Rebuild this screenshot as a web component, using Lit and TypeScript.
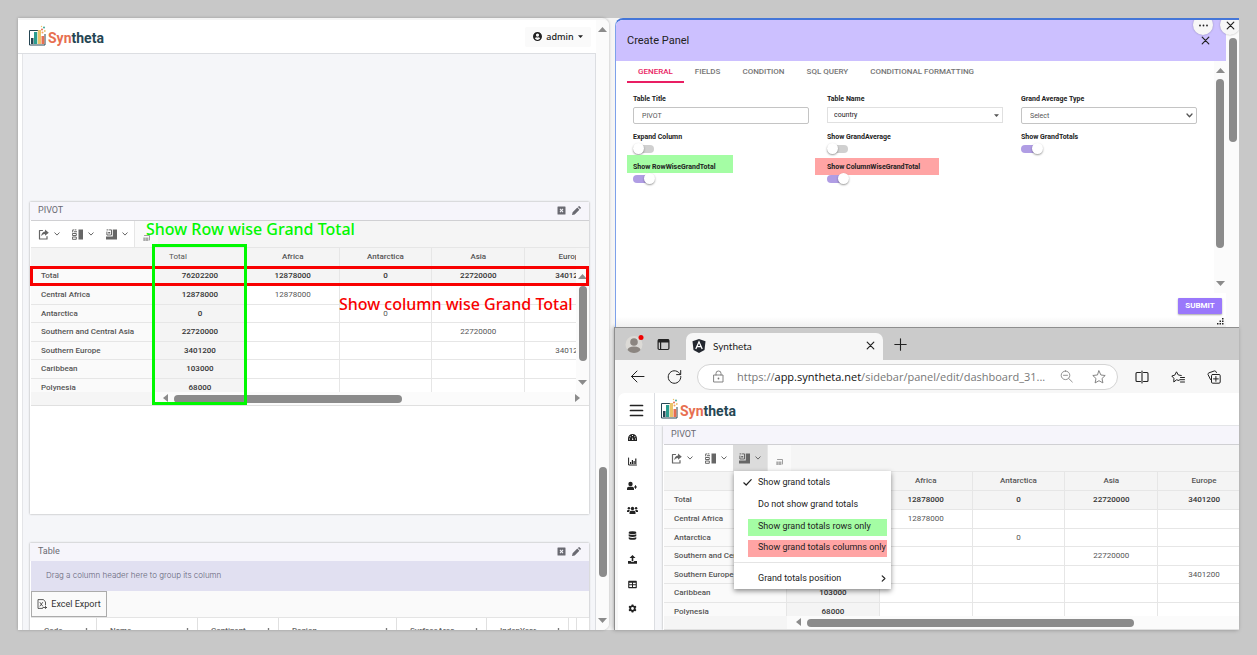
import { LitElement, html, css, svg, nothing } from "lit";
import { customElement, property } from "lit/decorators.js";
import { classMap } from "lit/directives/class-map.js";

const shared = css`
  * {
    box-sizing: border-box;
  }
  button {
    font: inherit;
    color: inherit;
    background: none;
    border: 0;
    padding: 0;
    display: inline-flex;
    align-items: center;
    justify-content: center;
    cursor: pointer;
  }
  svg {
    display: block;
    flex: none;
  }
`;

const icon = (size: number, box: number, body: unknown) =>
  html`<svg width=${size} height=${size} viewBox="0 0 ${box} ${box}" fill="currentColor" aria-hidden="true">${body}</svg>`;

const line = (d: string, w = 1) =>
  svg`<path d=${d} fill="none" stroke="currentColor" stroke-width=${w} stroke-linecap="round" stroke-linejoin="round"/>`;

const glyphs = {
  closeBox: icon(9, 9, svg`<path fill-rule="evenodd" d="M1 .5h7q.5 0 .5.5v7q0 .5-.5.5H1Q.5 8.500.5 8V1Q.5.5 1 .5zM2.600 3.300 3.700 4.500 2.600 5.700l.7.7L4.500 5.300l1.200 1.100.7-.7L5.300 4.500l1.100-1.200-.7-.7L4.500 3.700 3.300 2.600z"/>`),
  pencil: icon(9, 9, svg`<path d="M0 9l.6-2.700L5.300 1.600l2.100 2.100L2.700 8.400zM5.900 1l.8-.8q.4-.4.8 0l1.300 1.300q.4.4 0 .8L8 3.100z"/>`),
  share: icon(11, 11, svg`${line("M4.500 1.500H1.500V10H9V7.500", 1.200)}<path d="M7 .6 10.800 3.700 7 6.800V5Q4.600 5 3.300 7.300 3.400 2.900 7 2.500z"/>`),
  subtotals: icon(11, 11, svg`<path d="M6.500.5H11v10H6.500z"/>${line("M4 .9H3M1.500 .9H.7V3M.8 4.500h3.500v2H.8zM.8 8h3.500v2.300H.8z", 1)}<path d="M2 2.200h3v1H2z"/>`),
  totals: icon(11, 11, svg`<path d="M6.800.5H11V10.500H0V7.500H6.800z"/>${line("M1 .9h1M3.500 .9h2V6H.9V3", 1)}<path d="M2.200 3h2v1.500h-2z"/>`),
  small: icon(7, 7, svg`${line("M1.500 1.500H6.500V6", 0.8)}<path d="M.5 3.500h1.200V7H.5zM2.500 3.500h1.200V7H2.500zM4.300 3.500h1V7h-1z"/>`),
  chevron: icon(6, 6, line("M.8 1.800 3 4.100 5.200 1.800", 1)),
  check: icon(9, 9, line("M.8 4.800 3.200 7 8.200 1.600", 1.200)),
  right: icon(7, 7, line("M2.200.9 4.900 3.500 2.200 6.100", 1.200)),
  close: icon(9, 9, line("M1.200 1.200 7.800 7.800M7.800 1.200 1.200 7.800", 1.200)),
  dots: icon(9, 9, svg`<circle cx="1" cy="4.500" r=".9"/><circle cx="4.500" cy="4.500" r=".9"/><circle cx="8" cy="4.500" r=".9"/>`),
  user: icon(9, 9, svg`<path fill-rule="evenodd" d="M4.500 0a4.500 4.500 0 1 1 0 9 4.500 4.500 0 0 1 0-9zm0 1.500a1.600 1.600 0 1 0 0 3.200 1.600 1.600 0 0 0 0-3.200zM1.900 6.600Q4.500 9.500 7.100 6.600 6.500 5.200 5.500 5.200 4.500 5.600 3.500 5.200 2.500 5.200 1.900 6.600z"/>`),
  caret: icon(5, 5, svg`<path d="M0 1.200h5L2.500 4z"/>`),
  kebab: icon(7, 7, svg`<circle cx="3.500" cy="1" r=".8"/><circle cx="3.500" cy="3.500" r=".8"/><circle cx="3.500" cy="6" r=".8"/>`),
  excel: icon(10, 10, svg`${line("M8.500 6V3L6.500.6H1V9.400H5.500M6 8.500H9.500M8.300 7.300 9.500 8.500 8.300 9.500", 0.8)}${line("M3 3.500 5.600 7M5.600 3.500 3 7", 0.8)}`),
  menu: icon(15, 15, line("M1.500 2.500h12M1.500 7.500h12M1.500 12.500h12", 1.700)),
  back: icon(15, 15, line("M14 7.500H1.500M7 2 1.500 7.500 7 13", 1)),
  reload: icon(15, 15, line("M13.300 5.500A6.300 6.300 0 1 0 13.800 7.500M13.700 1.500V5.600H9.600", 1)),
  lock: icon(13, 13, svg`${line("M2 5h9v7H2zM4 5V3.300Q4 1 6.500 1T9 3.300V5", 0.9)}<circle cx="6.500" cy="8.500" r=".9"/>`),
  zoomOut: icon(13, 13, line("M5.500 1a4.300 4.300 0 1 1 0 8.600 4.300 4.300 0 0 1 0-8.600zM8.700 8.500 12.300 12M3.500 5.300h4", 0.8)),
  star: icon(14, 14, line("M7 .9 8.900 5l4.300.5-3.200 3 .9 4.400L7 10.700 3.100 12.900 4 8.500.8 5.500 5.100 5z", 0.9)),
  split: icon(14, 14, line("M5.500 2.500H2Q1 2.500 1 3.500v7q0 1 1 1h3.500M8.500 2.500H12q1 0 1 1v7q0 1-1 1H8.500M7 1V13", 1.100)),
  favourites: icon(14, 14, line("M8 10.500 5.500 9.800 2.800 12 2.900 8.300.8 6l3-.9L5.500 1.800 7.300 5l3 .5M9.500 7.500H13.500M8.700 9.700H13.500M9.500 12H13.500", 1)),
  collections: icon(14, 14, line("M3.500 9.500 1 4.500Q.8 3.300 2 2.800L7.500.9Q9 .8 9.500 2.500M5.500 4.500H12q1.200 0 1.200 1.200V12q0 1.200-1.200 1.200H5.700Q4.500 13.200 4.500 12V5.700Q4.500 4.500 5.500 4.500zM8.900 6.500v4.800M6.500 8.900h4.800", 1)),
  workspace: icon(13, 13, svg`${line("M2.300 1.500h8.400q1.200 0 1.200 1.200v7.600q0 1.200-1.200 1.200H2.300Q1.100 11.500 1.100 10.300V2.700Q1.100 1.500 2.300 1.500z", 1.200)}<path d="M1 1.500h11V4.500H1zM3 4h1.200v7.500H3z"/>`),
  plus: icon(13, 13, line("M6.500.8v11.400M.8 6.500h11.400", 1.100)),
};

const sideIcons: [string, unknown][] = [
  ["Dashboard", icon(9, 9, svg`<path fill-rule="evenodd" d="M0 5.500a4.500 4.500 0 0 1 9 0V8H0zM4 2h1v1H4zM1.700 3.200h1v1h-1zM6.300 3.200h1v1h-1zM1 5.500h1v1H1zM7 5.500h1v1H7zM4 7l.8-3 .5 3z"/>`)],
  ["Reports", icon(9, 9, svg`${line("M.6 1v7H8.500", 1)}<path d="M2 5h1.200v2H2zM3.800 3H5v4H3.800zM5.500 4h1.200v3H5.500zM7.200 1.500h1.200V7H7.200z"/>`)],
  ["Add user", icon(10, 10, svg`<circle cx="3.500" cy="3" r="2.200"/><path d="M0 9V7.500Q0 5.700 1.800 5.700h3.400Q7 5.700 7 7.500V9zM7 5.500h1V4.300h1v1.200h1v1H9v1.200H8V6.500H7z"/>`)],
  ["Groups", icon(11, 11, svg`<circle cx="5.500" cy="3.500" r="1.700"/><circle cx="1.900" cy="3.200" r="1.200"/><circle cx="9.100" cy="3.200" r="1.200"/><path d="M2.500 9V7.500Q2.500 5.800 4 5.800h3q1.500 0 1.500 1.700V9zM0 7V6Q0 4.900 1 4.900h1.800L2 7zM11 7V6q0-1.100-1-1.100H8.200L9 7z"/>`)],
  ["Data sources", icon(9, 9, svg`<path d="M.7 1.700Q.7.3 4.500.3t3.800 1.400v.7q-3.800 1.600-7.600 0zM.7 3.300q3.800 1.600 7.600 0v2q-3.800 1.600-7.600 0zM.7 6.200q3.800 1.600 7.600 0v1.200Q8.300 8.800 4.500 8.800T.7 7.400z"/>`)],
  ["Upload", icon(9, 9, svg`<path d="M4.500 0 7.500 3H5.300v3H3.700V3H1.500zM0 6h2.900v.8h3.200V6H9v2.700H0z"/>`)],
  ["Tables", icon(9, 9, svg`<path fill-rule="evenodd" d="M.8.8h7.400q.6 0 .6.600v6.200q0 .6-.6.6H.8Q.2 8.200.2 7.600V1.400Q.2.800.8.800zM1.300 2.800v1.500H4V2.800zM5 2.800v1.500h2.700V2.800zM1.300 5.300v1.700H4V5.300zM5 5.300v1.700h2.700V5.300z"/>`)],
  ["Settings", icon(9, 9, svg`<path fill-rule="evenodd" d="M3.700.4h1.600l.3 1.200.9.5 1.100-.4.800 1.400-.8.9v1l.8.9-.8 1.400-1.100-.4-.9.500-.3 1.200H3.700l-.3-1.200-.9-.5-1.100.4L.6 5.900 1.400 5V4L.6 3.100l.8-1.400 1.100.4.9-.5zM4.500 3.100a1.400 1.400 0 1 0 0 2.800 1.400 1.400 0 0 0 0-2.800z"/>`)],
];

/** Product mark with its wordmark. */
@customElement("brand-logo")
class BrandLogo extends LitElement {
  static styles = [
    shared,
    css`
      :host {
        display: flex;
        align-items: center;
        gap: 2px;
        font: 700 14px/24px Roboto, "Liberation Sans", sans-serif;
        color: #264653;
      }
      .warm {
        color: #e76f51;
      }
      .word {
        padding-top: 2px;
      }
    `,
  ];
  render() {
    return html`<svg width="17" height="24" viewBox="0 0 17 24" aria-hidden="true">
        <path d="M.5 5.500h15.500v14.500H.5z" fill="#fff" stroke="#264653" />
        <path d="M2 13h2.500v6H2z" fill="#264653" />
        <path d="M5 7h3.200v12H5z" fill="#2a9d8f" />
        <path d="M8.800 5h3.200v14H8.800z" fill="#e9c46a" />
        <path d="M12.500 11h2.800v8h-2.800z" fill="#e76f51" />
        <path d="M12 3h5v6h-5z" fill="#fff" />
        <circle cx="13" cy="4.500" r="1" fill="#e76f51" />
        <circle cx="15" cy="2.500" r=".9" fill="#2a9d8f" />
        <circle cx="15.800" cy="6" r=".9" fill="#e9c46a" />
        <circle cx="13.500" cy="7.500" r="1" fill="#f4a261" />
        <circle cx="12.500" cy="1.500" r=".7" fill="#e9c46a" />
      </svg>
      <span class="word"><span class="warm">Syn</span>theta</span>`;
  }
}

/** Classic scrollbar with arrow ends. */
@customElement("scroll-rail")
class ScrollRail extends LitElement {
  @property({ type: Boolean, reflect: true }) horizontal = false;
  @property({ type: Boolean }) bare = false;
  @property({ type: Number }) before = 0;
  @property({ type: Number }) thumb = 20;
  @property({ type: Number }) after = 0;
  static styles = [
    shared,
    css`
      :host {
        display: flex;
        flex-direction: column;
        align-items: center;
        background: #fbfbfb;
        color: #8b8b8b;
        padding: 5px 0;
        min-height: 0;
      }
      :host([horizontal]) {
        flex-direction: row;
        padding: 0 7px;
        min-width: 0;
      }
      .space,
      .thumb {
        flex: 0 1 0;
      }
      .thumb {
        background: #8b8b8b;
        border-radius: 4px;
        width: 8px;
        height: 8px;
      }
    `,
  ];
  render() {
    const paths = this.horizontal ? ["M7 0v8L2 4z", "M2 0v8L7 4z"] : ["M0 7h9L4.500 2z", "M0 2h9L4.500 7z"];
    const arrow = (d: string) => (this.bare ? nothing : icon(9, 9, svg`<path d=${d}/>`));
    return html`${arrow(paths[0])}
      <div class="space" style="flex-grow:${this.before}"></div>
      <div class="thumb" style="flex-grow:${this.thumb}"></div>
      <div class="space" style="flex-grow:${this.after}"></div>
      ${arrow(paths[1])}`;
  }
}

/** Cross-tab with its toolbar. */
@customElement("pivot-grid")
class PivotGrid extends LitElement {
  @property({ type: Boolean }) menu = false;
  @property({ type: Boolean, reflect: true }) notes = false;
  static styles = [
    shared,
    css`
      :host {
        display: block;
        position: relative;
        margin-left: 1px;
        font: 500 8px/10px Roboto, "Liberation Sans", sans-serif;
        color: #555;
        background: #f5f5f5;
        border-bottom: 1px solid #e0e0e0;
      }
      .bar {
        display: flex;
        height: 28px;
        border-top: 1px solid #d0d0d3;
        border-bottom: 1px solid #e6e6e6;
      }
      .tools {
        display: flex;
        background: #fff;
        padding-left: 1px;
        border-right: 1px solid #e6e6e6;
      }
      .tools button {
        width: 34px;
        gap: 5px;
        color: #666;
      }
      .tools .active {
        background: #dcdcdc;
      }
      .extra {
        width: 23px;
        background: #fafafa;
        color: #888;
        padding-top: 7px;
      }
      .body {
        display: grid;
        grid-template-columns: minmax(0, 1fr) auto;
      }
      .view {
        height: 144px;
        overflow: hidden;
      }
      table {
        width: 587px;
        table-layout: fixed;
        border-collapse: separate;
        border-spacing: 0;
      }
      col.first {
        width: 123px;
      }
      th,
      td {
        height: 18px;
        padding: 0;
        text-align: center;
        border-right: 1px solid #e6e6e6;
        border-bottom: 1px solid #e6e6e6;
        background: #fff;
        font-weight: 400;
        white-space: nowrap;
      }
      tr:nth-child(even) > * {
        height: 19px;
      }
      thead th,
      tr.sum > * {
        height: 19px;
        background: #f4f4f4;
        font-weight: 500;
      }
      th[scope="row"] {
        text-align: left;
        padding-left: 10px;
        background: #fafafa;
        font-weight: 500;
      }
      th.total {
        text-align: left;
        padding-left: 15px;
        font-weight: 400;
      }
      td.total {
        background: #f4f4f4;
      }
      td.total,
      tr.sum td {
        font-weight: 500;
        color: #333;
      }
      .side {
        width: 13px;
        padding-top: 19px;
        display: flex;
      }
      .side scroll-rail {
        flex: 1;
      }
      .foot {
        display: grid;
        grid-template-columns: 123px minmax(0, 1fr);
        height: 13px;
      }
      .foot .wide {
        margin-right: -20px;
      }
      .box {
        position: absolute;
        pointer-events: none;
      }
      .green {
        left: 121px;
        top: 24px;
        width: 95px;
        height: 161px;
        border: 3px solid #00f800;
      }
      .red {
        left: -1px;
        right: 0;
        top: 46px;
        height: 20px;
        border: 3px solid #f80000;
      }
      .note {
        position: absolute;
        font: 500 16px/18px "Noto Sans", sans-serif;
        white-space: nowrap;
      }
      .lime {
        left: 115px;
        top: 0;
        color: #00f800;
      }
      .scarlet {
        left: 308px;
        top: 75px;
        color: #f80000;
      }
      .menu {
        position: absolute;
        left: 70px;
        top: 27px;
        width: 157px;
        margin: 0;
        padding: 0;
        list-style: none;
        background: #fff;
        box-shadow: 0 2px 5px rgba(0, 0, 0, 0.45);
        font: 400 9px/22px Roboto, "Liberation Sans", sans-serif;
        color: #222;
      }
      .menu button {
        width: 100%;
        height: 22px;
        display: grid;
        grid-template-columns: 15px minmax(0, 1fr) 11px;
        text-align: left;
        padding-left: 9px;
        justify-items: start;
      }
      .menu .mark {
        width: 139px;
        height: 17px;
        margin: 4px 0 0 14px;
        padding: 0 0 4px 10px;
        display: block;
        line-height: 12px;
        white-space: nowrap;
      }
      .menu .rows {
        background: #a4fda4;
      }
      .menu .cols {
        background: #ffa4a4;
      }
      .menu .last {
        border-top: 1px solid #e4e4e4;
        margin-top: 5px;
        padding-top: 4px;
      }
    `,
  ];
  static heads = ["Africa", "Antarctica", "Asia", "Europe"];
  static data: [string, string, string[]][] = [
    ["Total", "76202200", ["12878000", "0", "22720000", "3401200"]],
    ["Central Africa", "12878000", ["12878000", "", "", ""]],
    ["Antarctica", "0", ["", "0", "", ""]],
    ["Southern and Central Asia", "22720000", ["", "", "22720000", ""]],
    ["Southern Europe", "3401200", ["", "", "", "3401200"]],
    ["Caribbean", "103000", ["", "", "", ""]],
    ["Polynesia", "68000", ["", "", "", ""]],
  ];
  render() {
    return html`
      <div class="bar">
        <div class="tools">
          <button aria-label="Export">${glyphs.share}${glyphs.chevron}</button>
          <button aria-label="Subtotals">${glyphs.subtotals}${glyphs.chevron}</button>
          <button aria-label="Grand totals" class=${classMap({ active: this.menu })}>${glyphs.totals}${glyphs.chevron}</button>
        </div>
        <button class="extra" aria-label="Number formatting">${glyphs.small}</button>
      </div>
      <div class="body">
        <div class="view">
          <table>
            <colgroup>
              <col class="first" />
              <col /><col /><col /><col /><col />
            </colgroup>
            <thead>
              <tr>
                <th></th>
                <th class="total">Total</th>
                ${PivotGrid.heads.map((h) => html`<th>${h}</th>`)}
              </tr>
            </thead>
            <tbody>
              ${PivotGrid.data.map(
                ([name, total, cells], i) => html`<tr class=${classMap({ sum: i === 0 })}>
                  <th scope="row">${name}</th>
                  <td class="total">${total}</td>
                  ${cells.map((c) => html`<td>${c}</td>`)}
                </tr>`
              )}
            </tbody>
          </table>
        </div>
        ${this.menu
          ? nothing
          : html`<div class="side"><scroll-rail .before=${5} .thumb=${74} .after=${17}></scroll-rail></div>`}
      </div>
      <div class="foot">
        <span></span>
        ${this.menu
          ? html`<scroll-rail class="wide" horizontal .before=${4} .thumb=${328} .after=${109}></scroll-rail>`
          : html`<scroll-rail horizontal .before=${4} .thumb=${229} .after=${171}></scroll-rail>`}
      </div>
      ${this.notes
        ? html`<div class="box red"></div>
            <div class="box green"></div>
            <span class="note lime">Show Row wise Grand Total</span>
            <span class="note scarlet">Show column wise Grand Total</span>`
        : nothing}
      ${this.menu
        ? html`<ul class="menu">
            <li><button>${glyphs.check}<span>Show grand totals</span></button></li>
            <li><button><span></span><span>Do not show grand totals</span></button></li>
            <li><button class="mark rows">Show grand totals rows only</button></li>
            <li><button class="mark cols">Show grand totals columns only</button></li>
            <li class="last"><button><span></span><span>Grand totals position</span>${glyphs.right}</button></li>
          </ul>`
        : nothing}
    `;
  }
}

/** Dashboard card. */
@customElement("dash-card")
class DashCard extends LitElement {
  @property() heading = "";
  @property({ type: Boolean }) plain = false;
  static styles = [
    shared,
    css`
      :host {
        display: block;
        background: #fff;
        box-shadow: 0 0 2px rgba(0, 0, 0, 0.35);
        color: #6a6a72;
      }
      header {
        display: flex;
        align-items: center;
        gap: 6px;
        height: 18px;
        padding: 0 8px 2px;
        background: #f6f5fb;
        font: 400 9px/16px Roboto, "Liberation Sans", sans-serif;
      }
      h2 {
        flex: 1;
        margin: 0;
        font: inherit;
      }
    `,
  ];
  render() {
    return html`<header>
        <h2>${this.heading}</h2>
        ${this.plain
          ? nothing
          : html`<button aria-label="Remove">${glyphs.closeBox}</button><button aria-label="Edit">${glyphs.pencil}</button>`}
      </header>
      <slot></slot>`;
  }
}

/** Main dashboard window. */
@customElement("dashboard-window")
class DashboardWindow extends LitElement {
  static styles = [
    shared,
    css`
      :host {
        display: grid;
        grid-template-columns: minmax(0, 1fr) 13px;
        overflow: hidden;
        background: #fff;
        border-top: 2px solid #f4f4f4;
        border-radius: 0 7px 7px 0;
        box-shadow: 0 0 3px rgba(0, 0, 0, 0.25);
        font: 400 9px/12px Roboto, "Liberation Sans", sans-serif;
      }
      .page {
        display: flex;
        flex-direction: column;
        min-height: 0;
      }
      .top {
        display: flex;
        flex: none;
        align-items: center;
        justify-content: space-between;
        height: 34px;
        padding: 0 5px 0 11px;
        border-bottom: 1px solid #dcdee2;
      }
      .admin {
        width: 66px;
        height: 20px;
        gap: 4px;
        background: #fafafa;
        border-radius: 2px;
        color: #222;
        font: 500 9px/12px "Noto Sans", sans-serif;
      }
      .canvas {
        flex: 1;
        min-height: 0;
        overflow: hidden;
        margin-left: 4px;
        border-left: 1px solid #e4e5e8;
        border-right: 1px solid #dcdee2;
        background: #f5f6f9;
        padding: 148px 6px 0 7px;
      }
      .pivot {
        height: 312px;
        margin-bottom: 29px;
      }
      .group {
        height: 30px;
        padding: 9px 15px;
        background: #e1e0f1;
        color: #66667a;
        font: 300 8px/11px Inter, sans-serif;
      }
      .group,
      .strip {
        margin: 0;
        margin-left: 1px;
      }
      .strip {
        background: #fafafa;
        border-bottom: 1px solid #e4e4e4;
        display: flex;
      }
      .excel {
        width: 76px;
        height: 26px;
        gap: 4px;
        border: 1px solid #ababab;
        color: #333;
      }
      table {
        width: 100%;
        table-layout: fixed;
        border-collapse: separate;
        border-spacing: 0;
        margin-left: 1px;
      }
      th {
        height: 26px;
        padding: 0 6px 0 13px;
        border-right: 1px solid #e0e0e0;
        font: 500 8px/12px Roboto, "Liberation Sans", sans-serif;
        text-align: left;
        color: #666;
      }
      th.empty {
        padding: 0;
      }
      th div {
        display: flex;
        justify-content: space-between;
        align-items: center;
      }
      th svg {
        color: #333;
      }
    `,
  ];
  static columns: [string, number][] = [
    ["Code", 66],
    ["Name", 101],
    ["Continent", 81],
    ["Region", 118],
    ["SurfaceArea", 90],
    ["IndepYear", 82],
  ];
  render() {
    return html`
      <div class="page">
        <header class="top">
          <brand-logo></brand-logo>
          <button class="admin">${glyphs.user}<span>admin</span>${glyphs.caret}</button>
        </header>
        <main class="canvas">
          <dash-card class="pivot" heading="PIVOT"><pivot-grid notes></pivot-grid></dash-card>
          <dash-card heading="Table">
            <p class="group">Drag a column header here to group its column</p>
            <div class="strip">
              <button class="excel">${glyphs.excel}<span>Excel Export</span></button>
            </div>
            <table>
              <colgroup>
                ${DashboardWindow.columns.map(([, w]) => html`<col style="width:${w}px" />`)}
                <col style="width:8px" />
                <col />
              </colgroup>
              <thead>
                <tr>
                  ${DashboardWindow.columns.map(([name]) => html`<th><div>${name}${glyphs.kebab}</div></th>`)}
                  <th class="empty"></th>
                  <th class="empty"></th>
                </tr>
              </thead>
            </table>
          </dash-card>
        </main>
      </div>
      <scroll-rail .before=${433} .thumb=${110} .after=${39}></scroll-rail>
    `;
  }
}

/** Panel settings dialog. */
@customElement("create-panel")
class CreatePanel extends LitElement {
  static styles = [
    shared,
    css`
      :host {
        display: grid;
        grid-template-columns: minmax(0, 1fr) 13px;
        position: relative;
        overflow: hidden;
        background: #fff;
        border-left: 1px solid #7da1ea;
        border-top: 2px solid #4476d8;
        border-radius: 8px 0 0 0;
        font: 400 9px/12px Roboto, "Liberation Sans", sans-serif;
        color: #222;
      }
      .dialog {
        display: grid;
        grid-template-rows: 41px minmax(0, 1fr) 34px;
        min-height: 0;
      }
      .title {
        display: flex;
        align-items: center;
        justify-content: space-between;
        padding: 0 16px 0 11px;
        background: #ccc0ff;
      }
      h1 {
        margin: 0;
        font: 400 11px/14px Roboto, "Liberation Sans", sans-serif;
      }
      .middle {
        display: grid;
        grid-template-columns: minmax(0, 1fr) 12px;
        min-height: 0;
      }
      .tabs {
        display: flex;
        margin-left: 11px;
        font: 500 8px/21px Roboto, "Liberation Sans", sans-serif;
        color: #757575;
      }
      .tabs button {
        padding: 0 11px;
        height: 22px;
        border-bottom: 2px solid transparent;
      }
      .tabs .on {
        color: #e91e63;
        border-color: #e91e63;
      }
      form {
        position: relative;
        display: grid;
        grid-template-columns: repeat(3, minmax(0, 1fr));
        gap: 8px 18px;
        padding: 11px 17px 0;
      }
      .field {
        position: relative;
        display: flex;
        flex-direction: column;
        align-items: flex-start;
      }
      label {
        font: 700 7px/10px Roboto, "Liberation Sans", sans-serif;
        color: #222;
      }
      .field.green::before,
      .field.pink::before {
        content: "";
        position: absolute;
        left: -6px;
        top: -7px;
        width: 106px;
        height: 18px;
        background: #a4fda4;
      }
      .field.pink::before {
        left: -12px;
        top: -4px;
        width: 124px;
        height: 17px;
        background: #ffa4a4;
      }
      .field label {
        position: relative;
      }
      input[type="text"],
      select {
        appearance: none;
        width: 100%;
        height: 17px;
        border: 1px solid #c4c4c4;
        border-radius: 2px;
        background: #fff;
        padding: 0 8px;
        font: 400 7px/12px Roboto, "Liberation Sans", sans-serif;
        color: #555;
      }
      .pick {
        display: grid;
        width: 100%;
        margin-top: 3px;
        align-items: center;
      }
      .pick > * {
        grid-area: 1 / 1;
      }
      .pick svg {
        justify-self: end;
        margin-right: 4px;
        color: #555;
        pointer-events: none;
      }
      .flat select {
        border-color: #e0e0e0;
        border-radius: 0;
        height: 16px;
        padding: 0 6px;
        color: #222;
      }
      input[type="checkbox"] {
        appearance: none;
        position: relative;
        width: 22px;
        height: 11px;
        margin: 1px 0 0;
        display: flex;
        align-items: center;
      }
      input[type="checkbox"]::before {
        content: "";
        width: 21px;
        height: 8px;
        border-radius: 4px;
        background: #d0d0d0;
      }
      input[type="checkbox"]::after {
        content: "";
        position: absolute;
        left: 0;
        top: 0;
        width: 11px;
        height: 11px;
        border-radius: 50%;
        background: #fff;
        box-shadow: 0 1px 2px rgba(0, 0, 0, 0.4);
      }
      input[type="checkbox"]:checked::before {
        background: #b09de4;
      }
      input[type="checkbox"]:checked::after {
        left: 11px;
      }
      .foot {
        display: flex;
        align-items: flex-end;
        justify-content: flex-end;
        flex-direction: column;
        gap: 4px;
        padding: 0 2px 2px;
        background: linear-gradient(#fff 70%, #f0f0f0);
      }
      .submit {
        width: 44px;
        height: 16px;
        margin-right: 2px;
        border-radius: 1px;
        background: #9a78fb;
        box-shadow: 0 1px 2px rgba(0, 0, 0, 0.35);
        color: #fff;
        font: 700 8px/12px Roboto, "Liberation Sans", sans-serif;
      }
      .round {
        position: absolute;
        top: -5px;
        right: 26px;
        width: 20px;
        height: 20px;
        border-radius: 50%;
        background: #f7f7f7;
        box-shadow: 0 0 2px rgba(0, 0, 0, 0.3);
      }
      .round.out {
        right: -1px;
      }
    `,
  ];
  static tabs = ["GENERAL", "FIELDS", "CONDITION", "SQL QUERY", "CONDITIONAL FORMATTING"];
  toggle(id: string, label: string, on: boolean, mark = "") {
    return html`<div class="field ${mark}">
      <label for=${id}>${label}</label>
      <input type="checkbox" id=${id} ?checked=${on} />
    </div>`;
  }
  render() {
    return html`
      <section class="dialog">
        <header class="title">
          <h1>Create Panel</h1>
          <button aria-label="Close dialog">${glyphs.close}</button>
        </header>
        <div class="middle">
          <div>
            <nav class="tabs">
              ${CreatePanel.tabs.map((t, i) => html`<button class=${classMap({ on: i === 0 })}>${t}</button>`)}
            </nav>
            <form>
              <div class="field">
                <label for="title">Table Title</label>
                <div class="pick"><input type="text" id="title" value="PIVOT" /></div>
              </div>
              <div class="field">
                <label for="name">Table Name</label>
                <div class="pick flat">
                  <select id="name"><option>country</option></select>
                  ${glyphs.caret}
                </div>
              </div>
              <div class="field">
                <label for="avg">Grand Average Type</label>
                <div class="pick">
                  <select id="avg"><option>Select</option></select>
                  ${icon(7, 7, line("M1 2 3.500 4.700 6 2", 1.300))}
                </div>
              </div>
              ${this.toggle("expand", "Expand Column", false)}
              ${this.toggle("average", "Show GrandAverage", false)}
              ${this.toggle("totals", "Show GrandTotals", true)}
              ${this.toggle("rows", "Show RowWiseGrandTotal", true, "green")}
              ${this.toggle("columns", "Show ColumnWiseGrandTotal", true, "pink")}
            </form>
          </div>
          <scroll-rail .before=${4} .thumb=${168} .after=${31}></scroll-rail>
        </div>
        <footer class="foot">
          <button class="submit">SUBMIT</button>
          ${icon(7, 7, svg`<path d="M5 0h1.500v1.500H5zM5 2.500h1.500V4H5zM2.500 2.500H4V4H2.500zM0 5h1.500v1.500H0zM2.500 5H4v1.500H2.500zM5 5h1.500v1.500H5z"/>`)}
        </footer>
      </section>
      <scroll-rail bare .before=${13} .thumb=${104} .after=${180}></scroll-rail>
      <button class="round" aria-label="More">${glyphs.dots}</button>
      <button class="round out" aria-label="Close">${glyphs.close}</button>
    `;
  }
}

/** Browser window with the totals menu open. */
@customElement("browser-window")
class BrowserWindow extends LitElement {
  static styles = [
    shared,
    css`
      :host {
        display: grid;
        grid-template-rows: 32px 33px minmax(0, 1fr);
        overflow: hidden;
        background: #f7f7f7;
        border-top: 1px solid #8e8e8e;
        border-left: 1px solid #8e8e8e;
        color: #222;
        box-shadow: -1px 0 4px rgba(0, 0, 0, 0.3);
        font: 400 10px/14px Lato, "Noto Sans", sans-serif;
      }
      .tabs {
        display: flex;
        align-items: center;
        background: #cbcbcb;
        padding-left: 9px;
      }
      .tabs > svg {
        margin-right: 13px;
      }
      .tab {
        display: grid;
        grid-template-columns: 14px minmax(0, 1fr) 9px;
        align-items: center;
        gap: 7px;
        align-self: end;
        width: 197px;
        height: 27px;
        margin: 0 11px 0 3px;
        padding: 0 8px 2px 6px;
        border-radius: 7px 7px 0 0;
        background: #f7f7f7;
      }
      .address {
        display: grid;
        grid-template-columns: 15px 15px minmax(0, 1fr) auto auto auto;
        gap: 22px;
        align-items: center;
        padding: 0 18px 0 15px;
      }
      .address .pill {
        display: grid;
        grid-template-columns: 13px minmax(0, 1fr) 13px 14px;
        align-items: center;
        height: 26px;
        margin: 0 -5px 0 -7px;
        padding: 0 12px 0 14px;
        border: 1px solid #d4d4d4;
        border-radius: 13px;
        background: #fff;
        color: #777;
        column-gap: 12px;
      }
      .pill svg:last-child {
        margin-left: 1px;
      }
      .pill svg:nth-child(3) {
        margin-left: -6px;
      }
      .url {
        font: 400 11px/16px "Open Sans", "Noto Sans", sans-serif;
        white-space: nowrap;
        color: #777;
      }
      .url b {
        font-weight: 400;
        color: #111;
      }
      .page {
        display: grid;
        grid-template-columns: 37px minmax(0, 1fr);
        grid-template-rows: 33px minmax(0, 1fr);
        margin-left: 3px;
        background: #fff;
        border-radius: 7px 0 0 0;
        min-height: 0;
      }
      .burger,
      .side {
        border-right: 1px solid #dcdee2;
      }
      .burger,
      .head {
        border-bottom: 1px solid #e4e5e8;
        display: flex;
        align-items: center;
        padding-top: 2px;
      }
      .burger {
        justify-content: center;
      }
      .head {
        padding-left: 6px;
      }
      .side {
        display: flex;
        flex-direction: column;
        align-items: center;
        gap: 10px;
        padding: 4px 8px 0 0;
        min-height: 0;
      }
      .side a {
        display: flex;
        align-items: center;
        flex: none;
        height: 15px;
        color: #222;
      }
      .side a:nth-child(odd) {
        height: 14px;
      }
      .canvas {
        background: #f5f6f9;
        padding-left: 8px;
        overflow: hidden;
        min-height: 0;
      }
    `,
  ];
  render() {
    return html`
      <div class="tabs">
        <svg width="20" height="20" viewBox="0 0 20 20" aria-hidden="true">
          <circle cx="10" cy="10.500" r="8.500" fill="#dcdad6" />
          <circle cx="10" cy="8" r="3.800" fill="#8b8580" />
          <path d="M3.500 16Q4 12.500 10 12.500T16.500 16Q14 19 10 19T3.500 16z" fill="#8b8580" />
          <circle cx="17" cy="3.500" r="2.500" fill="#f00000" />
        </svg>
        ${glyphs.workspace}
        <div class="tab">
          <svg width="14" height="14" viewBox="0 0 14 14" aria-hidden="true">
            <path d="M7 0l6.500 2.300-1 8.600L7 14l-5.500-3.100-1-8.600z" fill="#23272f" />
            <path d="M3.800 10 7 2.800 10.200 10M5 7.700h4" fill="none" stroke="#fff" stroke-width="1.300" />
          </svg>
          <span>Syntheta</span>
          <button aria-label="Close tab">${glyphs.close}</button>
        </div>
        <button aria-label="New tab">${glyphs.plus}</button>
      </div>
      <div class="address">
        <button aria-label="Back">${glyphs.back}</button>
        <button aria-label="Reload">${glyphs.reload}</button>
        <div class="pill">
          ${glyphs.lock}
          <span class="url">https://<b>app.syntheta.net</b>/sidebar/panel/edit/dashboard_31...</span>
          ${glyphs.zoomOut}${glyphs.star}
        </div>
        <button aria-label="Split screen">${glyphs.split}</button>
        <button aria-label="Favourites">${glyphs.favourites}</button>
        <button aria-label="Collections">${glyphs.collections}</button>
      </div>
      <div class="page">
        <div class="burger"><button aria-label="Menu">${glyphs.menu}</button></div>
        <div class="head"><brand-logo></brand-logo></div>
        <nav class="side">${sideIcons.map(([name, g]) => html`<a href="#" aria-label=${name}>${g}</a>`)}</nav>
        <div class="canvas">
          <dash-card heading="PIVOT" plain><pivot-grid menu></pivot-grid></dash-card>
        </div>
      </div>
    `;
  }
}

@customElement("app-root")
class AppRoot extends LitElement {
  static styles = css`
    :host {
      display: grid;
      box-sizing: border-box;
      grid-template-columns: minmax(0, 591fr) minmax(0, 624fr);
      gap: 6px;
      height: 100vh;
      padding: 18px 18px 25px;
      background: linear-gradient(#f5f5f5, #f5f5f5) content-box, #c8c8c8;
    }
    .right {
      display: grid;
      grid-template-rows: minmax(0, 309fr) minmax(0, 303fr);
      min-height: 0;
    }
    dashboard-window {
      min-height: 0;
    }
    browser-window {
      margin-left: -1px;
    }
  `;
  render() {
    return html`
      <dashboard-window></dashboard-window>
      <div class="right">
        <create-panel></create-panel>
        <browser-window></browser-window>
      </div>
    `;
  }
}
